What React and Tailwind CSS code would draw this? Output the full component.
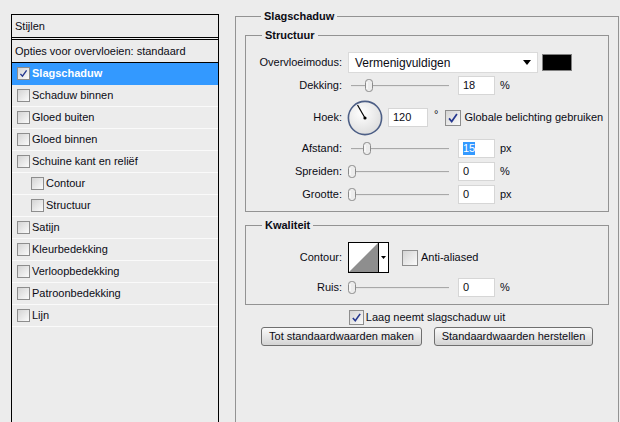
import React from 'react';

const styleItems = [
  { label: 'Slagschaduw', checked: true, active: true },
  { label: 'Schaduw binnen' },
  { label: 'Gloed buiten' },
  { label: 'Gloed binnen' },
  { label: 'Schuine kant en reliëf' },
  { label: 'Contour', sub: true },
  { label: 'Structuur', sub: true },
  { label: 'Satijn' },
  { label: 'Kleurbedekking' },
  { label: 'Verloopbedekking' },
  { label: 'Patroonbedekking' },
  { label: 'Lijn' },
];

const CheckMark = () => (
  <svg viewBox="0 0 16 16" className="w-full h-full">
    <path d="M3.5 8.5 L6.5 12 L12.5 3.5" fill="none" stroke="#26388f" strokeWidth="2" />
  </svg>
);

const Box = ({ checked, className }) => (
  <span
    className={`${className} shrink-0 flex items-center justify-center border border-[#8d8d8d] bg-linear-to-br from-[#d4d4d4] to-[#fbfbfb]`}
  >
    {checked && <CheckMark />}
  </span>
);

const Field = ({ children, className }) => (
  <div className={`${className} h-[19px] bg-white border border-[#d6d6d6] pl-[4px] flex items-center`}>
    {children}
  </div>
);

const Slider = ({ thumb }) => (
  <div className="relative ml-[6px] w-[102px] h-[14px]">
    <div className="absolute left-[3px] right-[1px] top-[6px] h-[2px] border-t border-[#a8a8a8] bg-[#e4e4e4]" />
    <svg
      viewBox="0 0 8 13"
      className="absolute top-0 w-[8px] h-[13px]"
      style={{ left: thumb }}
    >
      <rect x="0.5" y="0.5" width="7" height="12" rx="3" fill="#ececec" stroke="#8b8b8b" />
      <line x1="2" y1="3" x2="2" y2="10" stroke="#ffffff" />
    </svg>
  </div>
);

const SliderRow = ({ label, thumb, value, unit, selected, className }) => (
  <div className={`${className} flex items-center h-[19px]`}>
    <span className="w-[96px] text-right">{label}</span>
    <Slider thumb={thumb} />
    <Field className="ml-[8px] w-[37px]">
      {selected ? <span className="bg-[#3399ff] text-white leading-[13px]">{value}</span> : value}
    </Field>
    <span className="ml-[5px]">{unit}</span>
  </div>
);

const Legend = ({ children }) => (
  <legend className="ml-[16px] px-[3px] font-bold leading-[14px]">{children}</legend>
);

const Dial = () => (
  <svg viewBox="0 0 36 36" className="ml-[5px] w-[36px] h-[36px]">
    <defs>
      <radialGradient id="dialFill" cx="40%" cy="35%" r="70%">
        <stop offset="0%" stopColor="#ffffff" />
        <stop offset="100%" stopColor="#dcdcdc" />
      </radialGradient>
    </defs>
    <circle cx="18" cy="18" r="16.6" fill="url(#dialFill)" stroke="#4d5f86" strokeWidth="1.6" />
    <line x1="18" y1="18" x2="10.5" y2="5" stroke="#000" strokeWidth="1.2" />
    <circle cx="18" cy="18" r="1.6" fill="#000" />
  </svg>
);

export default function App() {
  return (
    <div className="w-[620px] h-[422px] overflow-hidden bg-[#ececec] text-[11px] text-[#0b0b14] font-['Liberation_Sans',Arial,sans-serif] flex items-start pt-[9px] pl-[11px]">
      {/* styles list */}
      <div className="mt-[5px] w-[208px] h-[420px] shrink-0 border border-black">
        <div className="h-[25px] border-b-[3px] border-double border-black pl-[3px] flex items-center">Stijlen</div>
        <div className="h-[23px] border-b border-black pl-[3px] flex items-center">Opties voor overvloeien: standaard</div>
        {styleItems.map((s) => (
          <div
            key={s.label}
            className={`h-[22px] flex items-center gap-[2px] border-b ${s.active ? 'bg-[#3399ff] text-white font-bold border-[#3399ff]' : 'border-[#fafafa]'} ${s.sub ? 'pl-[19px]' : 'pl-[5px]'}`}
          >
            <Box checked={s.checked} className="w-[13px] h-[13px]" />
            <span>{s.label}</span>
          </div>
        ))}
      </div>

      {/* settings */}
      <fieldset className="ml-[16px] w-[384px] h-[440px] shrink-0 border border-[#939393] px-[9px]">
        <Legend>Slagschaduw</Legend>

        <fieldset className="mt-[5px] border border-[#939393] pb-[7px]">
          <Legend>Structuur</Legend>

          <div className="mt-[10px] h-[21px] flex items-center">
            <span className="w-[96px] text-right">Overvloeimodus:</span>
            <div className="ml-[6px] w-[190px] h-[21px] bg-white border border-[#dadada] flex items-center justify-between pl-[6px] pr-[6px] text-[12px]">
              <span>Vermenigvuldigen</span>
              <svg viewBox="0 0 8 5" className="w-[8px] h-[5px]">
                <path d="M0 0 H8 L4 5 Z" fill="#000" />
              </svg>
            </div>
            <div className="ml-[4px] w-[30px] h-[17px] bg-black border border-[#808080]" />
          </div>

          <SliderRow className="mt-[3px]" label="Dekking:" thumb={17} value="18" unit="%" />

          <div className="mt-[5px] h-[35px] flex items-center">
            <span className="w-[96px] text-right">Hoek:</span>
            <Dial />
            <Field className="ml-[5px] w-[40px]">120</Field>
            <span className="ml-[6px] self-start mt-[6px]">°</span>
            <Box checked className="ml-[7px] w-[16px] h-[16px]" />
            <span className="ml-[3px]">Globale belichting gebruiken</span>
          </div>

          <SliderRow className="mt-[4px]" label="Afstand:" thumb={15} value="15" unit="px" selected />
          <SliderRow className="mt-[4px]" label="Spreiden:" thumb={0} value="0" unit="%" />
          <SliderRow className="mt-[4px]" label="Grootte:" thumb={0} value="0" unit="px" />
        </fieldset>

        <fieldset className="mt-[6px] border border-[#939393] pb-[7px]">
          <Legend>Kwaliteit</Legend>

          <div className="mt-[10px] h-[31px] flex items-center">
            <span className="w-[96px] text-right">Contour:</span>
            <div className="ml-[6px] w-[41px] h-[31px] border border-black bg-white flex">
              <svg viewBox="0 0 29 29" className="w-[29px] h-[29px]">
                <path d="M0 29 L29 0 L29 29 Z" fill="#8e8e8e" />
              </svg>
              <div className="w-[10px] border-l border-black flex items-center justify-center">
                <svg viewBox="0 0 5 3" className="w-[5px] h-[3px]">
                  <path d="M0 0 H5 L2.5 3 Z" fill="#000" />
                </svg>
              </div>
            </div>
            <Box className="ml-[13px] w-[16px] h-[16px]" />
            <span className="ml-[3px]">Anti-aliased</span>
          </div>

          <SliderRow className="mt-[5px]" label="Ruis:" thumb={0} value="0" unit="%" />
        </fieldset>

        <div className="mt-[4px] h-[16px] flex items-center justify-center">
          <Box checked className="w-[15px] h-[15px]" />
          <span className="ml-[2px]">Laag neemt slagschaduw uit</span>
        </div>

        <div className="mt-[2px] flex justify-center gap-[12px]">
          <button className="w-[161px] h-[19px] border border-[#6f6f6f] rounded-[3px] bg-linear-to-b from-[#fafafa] to-[#d4d4d4] text-[11px]">
            Tot standaardwaarden maken
          </button>
          <button className="w-[159px] h-[19px] border border-[#6f6f6f] rounded-[3px] bg-linear-to-b from-[#fafafa] to-[#d4d4d4] text-[11px]">
            Standaardwaarden herstellen
          </button>
        </div>
      </fieldset>
    </div>
  );
}
